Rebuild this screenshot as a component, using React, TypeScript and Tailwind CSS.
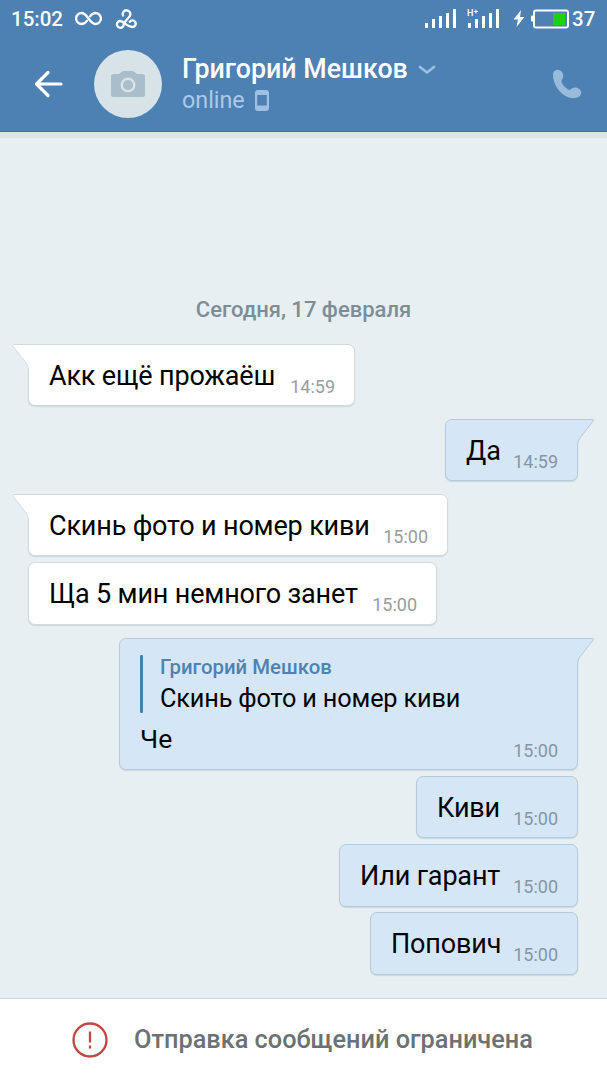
import React from "react";
import clsx from "clsx";

type Message = {
  text: string;
  time: string;
  mine?: boolean;
  tail?: boolean;
  quote?: { author: string; text: string };
  box: string;
};

const messages: Message[] = [
  { text: "Акк ещё прожаёш", time: "14:59", tail: true, box: "w-[327px] h-[62px]" },
  { text: "Да", time: "14:59", mine: true, tail: true, box: "w-[133px] h-[62px] mt-[13px]" },
  { text: "Скинь фото и номер киви", time: "15:00", tail: true, box: "w-[420px] h-[62px] mt-[13px]" },
  { text: "Ща 5 мин немного занет", time: "15:00", box: "w-[409px] h-[63px] mt-[6px]" },
  {
    text: "Че",
    time: "15:00",
    mine: true,
    tail: true,
    quote: { author: "Григорий Мешков", text: "Скинь фото и номер киви" },
    box: "w-[459px] h-[132px] mt-[13px]",
  },
  { text: "Киви", time: "15:00", mine: true, box: "w-[162px] h-[62px] mt-[6px]" },
  { text: "Или гарант", time: "15:00", mine: true, box: "w-[239px] h-[63px] mt-[6px]" },
  { text: "Попович", time: "15:00", mine: true, box: "w-[208px] h-[63px] mt-[5px]" },
];

const signalBars = ["h-[5px]", "h-[9px]", "h-[12px]", "h-[15px]", "h-[19px]"];

const Signal: React.FC<{ label?: string }> = ({ label }) => (
  <div className="relative flex h-[19px] items-end gap-[4px]">
    {label && (
      <span className="absolute top-0 -left-[1px] text-[9px] leading-[9px] font-medium">
        {label}
        <span className="relative -top-[2px] text-[8px]">+</span>
      </span>
    )}
    {signalBars.map((h) => (
      <div key={h} className={clsx("w-[3px] bg-white", h)} />
    ))}
  </div>
);

const StatusBar: React.FC = () => (
  <div className="flex h-[37px] items-center pr-[11px] pl-[11px] text-white">
    <span className="w-[53px] text-[20.5px] leading-[24px] font-medium whitespace-nowrap">15:02</span>
    <svg className="ml-[11px]" width="27" height="15" viewBox="0 0 27 15" fill="none" stroke="currentColor" strokeWidth="2.3" strokeLinecap="round">
      <path d="M12 9.6C10.3 12 8.8 13 6.6 13A5.5 5.5 0 0 1 6.6 2C9.4 2 11 4 13.5 7.5S17.6 13 20.4 13A5.5 5.5 0 0 0 20.4 2C18.2 2 16.7 3 15 5.4" />
    </svg>
    <svg className="ml-[13px]" width="23" height="20" viewBox="0 0 23 20" fill="none" stroke="currentColor" strokeWidth="2.3" strokeLinecap="round">
      <path d="M8 6.5A3.8 3.8 0 1 1 14.8 7C13.3 9.8 10 11.5 8.7 15A3.4 3.4 0 1 1 5.3 12C9 12 11.5 18 17.5 18A3.3 3.3 0 1 0 14.7 12.8" />
    </svg>
    <div className="ml-auto flex items-center">
      <Signal />
      <div className="ml-[12px]">
        <Signal label="H" />
      </div>
      <svg className="ml-[14px]" width="12" height="17" viewBox="0 0 12 17" fill="currentColor">
        <path d="M8 0 0.5 9.5H5L3.5 17 11.5 7H7Z" />
      </svg>
      <svg className="ml-[6px]" width="38" height="20" viewBox="0 0 38 20">
        <rect x="0" y="6.5" width="4" height="6" rx="1" fill="white" />
        <rect x="3" y="1.5" width="34" height="17" rx="2" fill="none" stroke="white" strokeWidth="2" />
        <rect x="22" y="4" width="12" height="12" fill="#1fd00d" />
      </svg>
      <span className="ml-[3px] w-[24px] text-[20.5px] leading-[24px] font-medium">37</span>
    </div>
  </div>
);

const Header: React.FC = () => (
  <header className="h-[132px] border-b border-[#426f9d] bg-[#4d80b3]">
    <StatusBar />
    <div className="flex h-[94px] items-center">
      <svg className="ml-[34px]" width="29" height="28" viewBox="0 0 29 28" fill="none" stroke="white" strokeWidth="3.2" strokeLinecap="round" strokeLinejoin="round">
        <path d="M14 2.5 2.5 14 14 25.5M3 14H27" />
      </svg>
      <div className="ml-[31px] flex size-[68px] items-center justify-center rounded-full bg-[#d8e3e8]">
        <svg width="34" height="26" viewBox="0 0 34 26">
          <path d="M2.5 3H8l2.5-2Q11.5 0 13 0h8q1.5 0 2.5 1L26 3h5.5Q34 3 34 5.5v18Q34 26 31.5 26h-29Q0 26 0 23.5v-18Q0 3 2.5 3Z" fill="#a9bdcb" />
          <circle cx="17" cy="14" r="6.3" fill="none" stroke="#d8e3e8" strokeWidth="2.4" />
        </svg>
      </div>
      <div className="ml-[20px] h-[64px] pt-[1px]">
        <div className="flex items-center">
          <span className="w-[226px] text-[26.8px] leading-[32px] font-medium whitespace-nowrap text-white">Григорий Мешков</span>
          <svg className="mt-[1px] ml-[10px]" width="18" height="10" viewBox="0 0 18 10" fill="none" stroke="#9dbfe0" strokeWidth="2.6" strokeLinecap="round" strokeLinejoin="round">
            <path d="M2 2 9 7.5 16 2" />
          </svg>
        </div>
        <div className="flex items-center">
          <span className="w-[63px] text-[23.3px] leading-[30px] whitespace-nowrap text-[#abcaeb]">online</span>
          <svg className="ml-[10px]" width="14" height="21" viewBox="0 0 14 21">
            <path fillRule="evenodd" fill="#9fc0e3" d="M3 0h8q3 0 3 3v15q0 3-3 3H3q-3 0-3-3V3Q0 0 3 0ZM2.2 5v10.5h9.6V5Z" />
          </svg>
        </div>
      </div>
      <svg className="mr-[25px] ml-auto" width="30" height="30" viewBox="0 0 30 30" fill="#9abadc">
        <path d="M1 6C1 3 3 .8 5.7.8c3 0 5.600 2.900 5.600 6.200 0 2.400-1.400 3.500-2 5 .9 3.800 4.500 7.700 8.400 9 1.700-.9 2.500-2.600 5.200-2.600 3.400 0 6.300 2.300 6.300 5.200 0 3.700-3.600 5.600-7.700 5.600C11.500 29.200 1 17.500 1 6Z" />
      </svg>
    </div>
  </header>
);

const Tail: React.FC<{ mine?: boolean }> = ({ mine }) => (
  <svg
    className={clsx("absolute -top-px", mine ? "-right-[18px] -scale-x-100" : "-left-[18px]")}
    width="24"
    height="30"
    viewBox="0 0 24 30"
  >
    <path d="M24 0H2Q0.5 0.5 1.5 2L14.5 18.5Q17 22 17 26V30H24Z" fill={mine ? "#d5e7f7" : "#ffffff"} />
    <path
      d="M24 .5H2Q1 .8 1.8 2L14.8 18.5Q17.5 22 17.5 26V30"
      fill="none"
      stroke={mine ? "#b5cbdb" : "#d1dbdd"}
    />
  </svg>
);

const Bubble: React.FC<{ message: Message }> = ({ message }) => {
  const { text, time, mine, tail, quote, box } = message;
  return (
    <div
      className={clsx(
        "relative flex flex-col rounded-[7px] border pr-[19px] pl-[20px] shadow-[0_1px_1px_rgba(120,145,160,0.25)]",
        mine ? "mr-[29px] self-end border-[#b5cbdb] bg-[#d5e7f7]" : "ml-[28px] self-start border-[#d1dbdd] bg-white",
        box
      )}
    >
      {tail && <Tail mine={mine} />}
      {quote && (
        <div className="mt-[16px] flex h-[58px]">
          <div className="w-[3px] rounded-[1px] bg-[#4c7eae]" />
          <div className="ml-[17px] whitespace-nowrap">
            <p className="text-[20.4px] leading-[24px] font-medium text-[#4f82b0]">{quote.author}</p>
            <p className="mt-[2px] text-[25.3px] leading-[36px] tracking-[-0.17px] text-black">{quote.text}</p>
          </div>
        </div>
      )}
      <div className={clsx("flex justify-between whitespace-nowrap", quote ? "mt-[9px]" : "mt-[14px]")}>
        <p className={clsx("leading-[34px] text-black", quote ? "text-[26.5px]" : "text-[27px] tracking-[-0.17px]")}>{text}</p>
        <p className={clsx("text-[18px] leading-[21px]", quote ? "mt-[18px]" : "mt-[17px]", mine ? "text-[#8496a6]" : "text-[#979da1]")}>
          {time}
        </p>
      </div>
    </div>
  );
};

export default function App() {
  return (
    <div className="flex h-[1080px] w-[607px] flex-col overflow-hidden bg-[#e8eff2] font-['Roboto',sans-serif]">
      <Header />
      <main className="flex flex-1 flex-col border-t-[6px] border-[#dde4e8]">
        <p className="mt-[159px] mb-[22px] text-center text-[22px] leading-[25px] font-medium text-[#7d8d98]">
          Сегодня, 17 февраля
        </p>
        {messages.map((message, idx) => (
          <Bubble key={idx} message={message} />
        ))}
      </main>
      <footer className="flex h-[82px] items-center border-t border-[#cbd6da] bg-white pl-[72px]">
        <svg width="36" height="36" viewBox="0 0 36 36" fill="none" stroke="#c04744" strokeWidth="2.3">
          <circle cx="18" cy="18" r="16.5" />
          <path d="M18 9.5V20.5M18 23.5V26.5" />
        </svg>
        <p className="ml-[26px] text-[25.3px] leading-[30px] font-medium whitespace-nowrap text-[#6b7275]">
          Отправка сообщений ограничена
        </p>
      </footer>
    </div>
  );
}
